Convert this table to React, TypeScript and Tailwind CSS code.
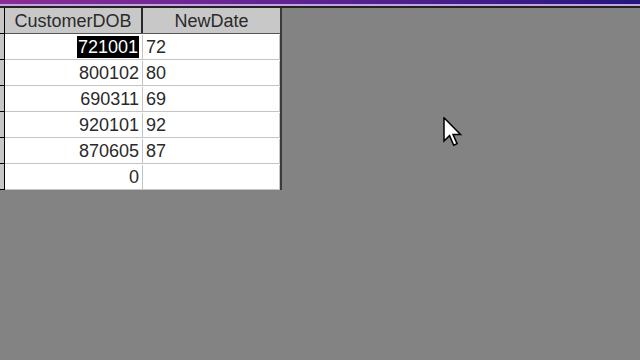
const rows: { dob: string; nd: string }[] = [
  { dob: "721001", nd: "72" },
  { dob: "800102", nd: "80" },
  { dob: "690311", nd: "69" },
  { dob: "920101", nd: "92" },
  { dob: "870605", nd: "87" },
  { dob: "0", nd: "" },
];

function Cursor() {
  return (
    <svg className="absolute left-[443px] top-[117px]" width="20" height="30" viewBox="0 0 13 20">
      <path d="M0.5 0.5 L0.5 16 L4.2 12.4 L7 18.8 L9.2 17.8 L6.5 11.6 L11.5 11.6 Z" fill="#fff" stroke="#000" strokeWidth="1" strokeLinejoin="miter" />
    </svg>
  );
}

export default function App() {
  return (
    <div className="relative h-[360px] w-[640px] overflow-hidden bg-[#838383] font-['Liberation_Sans',Arial,sans-serif] text-[18px] text-[#2a2a2a]">
      {/* title bar remnant */}
      <div className="h-[4px] bg-gradient-to-r from-[#8a2c96] via-[#5a2192] to-[#24167e]" />
      <div className="h-[2px] bg-[#c4a4dc]" />
      <div className="h-[2px] bg-[#222]" />

      <div className="flex">
        {/* row selectors */}
        <div className="flex w-[5px] flex-col border-r border-black bg-[#c6c6c6]">
          <div className="h-[26px] border-b border-black" />
          {rows.map((_, i) => (
            <div key={i} className="h-[26px] border-b border-black" />
          ))}
        </div>

        <div className="flex w-[277px] flex-col border-r-2 border-[#3a3a3a]">
          <div className="flex h-[26px] border-b border-[#555] bg-[#c8c8c8]">
            <div className="flex w-[138px] items-center justify-center border-r-2 border-[#2a2a2a] pt-[1px] leading-none">CustomerDOB</div>
            <div className="flex flex-1 items-center justify-center pt-[1px] leading-none">NewDate</div>
          </div>
          {rows.map((r, i) => (
            <div key={i} className="flex h-[26px] border-b border-[#c4c4c4] bg-white pt-[1px] leading-none">
              <div className="flex w-[138px] items-center justify-end border-r border-[#c4c4c4] pr-[3px]">
                {i === 0 ? <span className="bg-black px-[1px] py-[2px] text-white">{r.dob}</span> : r.dob}
              </div>
              <div className="flex flex-1 items-center border-r border-[#c4c4c4] pl-[3px]">{r.nd}</div>
            </div>
          ))}
        </div>
      </div>

      <Cursor />
    </div>
  );
}
